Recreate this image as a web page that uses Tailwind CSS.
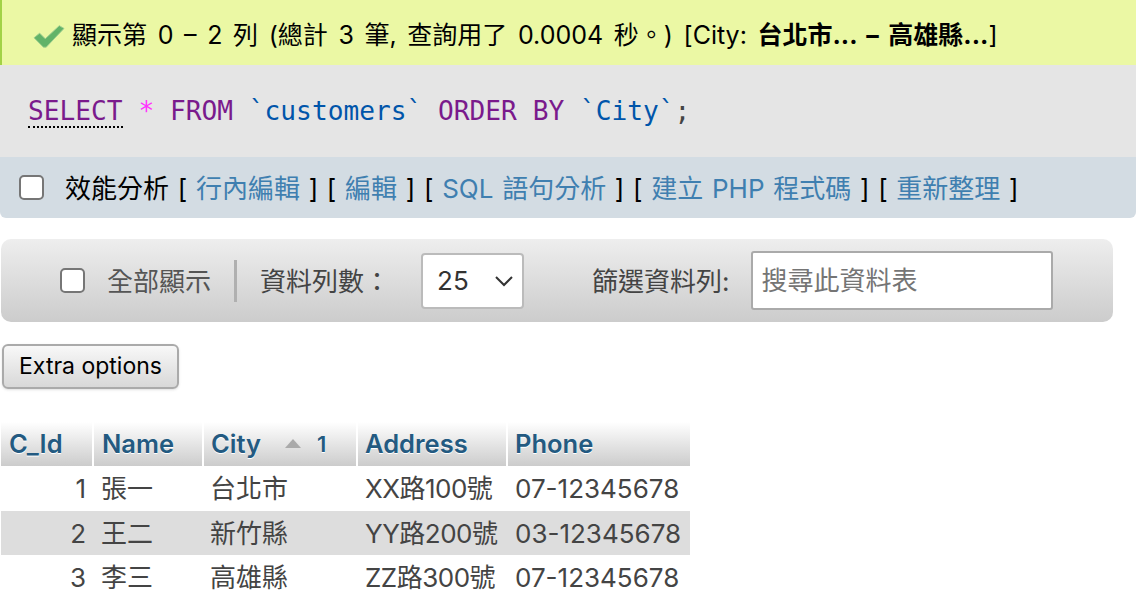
<!DOCTYPE html>
<html lang="zh-Hant">
<head>
    <meta charset="UTF-8">
    <meta name="viewport" content="width=device-width, initial-scale=1.0">
    <title>customers</title>
    <script src="https://cdn.jsdelivr.net/npm/@tailwindcss/browser@4"></script>
</head>
<body class="bg-white h-[612px] overflow-hidden text-[#444] font-['Inter','Noto_Sans_CJK_TC',sans-serif]">
    <!-- Query result message -->
    <div class="h-[65px] flex items-center bg-[#ebf8a4] border-l-2 border-[#a2d246] pl-[30px] pt-[6px] text-[25px] text-black whitespace-nowrap [word-spacing:3.6px]">
        <svg class="w-[34px] h-[30px] mr-[6px] shrink-0 -mt-[1px]" viewBox="0 0 36 32">
            <path d="M2 19 L8 14 L14 20 L29 6 L34 9 L15 29 L12 29 Z" fill="#62b368" stroke="#9fcf8f" stroke-width="1"/>
        </svg>
        <span>顯示第 0 – 2 列 (總計 3 筆, 查詢用了 0.0004 秒。) [City: <b>台北市... – 高雄縣...</b>]</span>
    </div>

    <!-- SQL -->
    <div class="h-[92px] flex items-center bg-[#e5e5e5] pl-[28px] pt-[1px] font-['DejaVu_Sans_Mono',monospace] text-[26.2px] whitespace-pre">
        <span><span class="text-[#7a1a8c] border-b-2 border-dotted border-black">SELECT</span> <span class="text-[#ff33ff]">*</span> <span class="text-[#7a1a8c]">FROM</span> <span class="text-[#0055aa]">`customers`</span> <span class="text-[#7a1a8c]">ORDER BY</span> <span class="text-[#0055aa]">`City`</span><span class="text-[#444]">;</span></span>
    </div>

    <!-- Query tools -->
    <div class="h-[61px] flex items-center bg-[#d3dce3] rounded-b-md pl-[19px] text-[26px] text-black whitespace-pre [word-spacing:1.4px]">
        <input type="checkbox" class="appearance-none w-[25px] h-[25px] bg-white border-2 border-[#767676] rounded-[5px] mr-[21px] shrink-0">
        <span class="pt-[1px]">效能分析 [ <a class="text-[#3f7fb0]">行內編輯</a> ] [ <a class="text-[#3f7fb0]">編輯</a> ] [ <a class="text-[#3f7fb0]">SQL 語句分析</a> ] [ <a class="text-[#3f7fb0]">建立 PHP 程式碼</a> ] [ <a class="text-[#3f7fb0]">重新整理</a> ]</span>
    </div>

    <!-- Navigation toolbar -->
    <div class="mt-[21px] ml-[1px] w-[1112px] h-[83px] flex items-center rounded-[10px] bg-gradient-to-b from-[#eeeeee] to-[#cccccc] pl-[59px] text-[26px] whitespace-nowrap">
        <input type="checkbox" class="appearance-none w-[25px] h-[25px] bg-white border-2 border-[#767676] rounded-[5px] mr-[22px] shrink-0">
        <span class="text-[#555] pt-[1px]">全部顯示</span>
        <span class="w-[3px] h-[42px] bg-[#b0b0b0] mx-[23px]"></span>
        <span class="pt-[1px]">資料列數：</span>
        <div class="ml-[31px] w-[103px] h-[56px] flex items-center justify-between bg-white border-2 border-[#bbb] rounded-[4px] pl-[14px] pr-[8px] text-[#333]">
            <span>25</span>
            <svg class="w-[20px] h-[12px]" viewBox="0 0 20 12" fill="none" stroke="#333" stroke-width="2"><path d="M2 2 L10 10 L18 2"/></svg>
        </div>
        <span class="ml-[68px] pt-[1px]">篩選資料列:</span>
        <input type="text" placeholder="搜尋此資料表" class="ml-[21px] w-[302px] h-[59px] bg-white border-2 border-[#aaa] rounded-[3px] pl-[9px] text-[26px] placeholder:text-[#757575]">
    </div>

    <button class="mt-[22px] ml-[2px] block w-[177px] h-[45px] rounded-[6px] border-2 border-[#aaa] bg-gradient-to-b from-[#f8f8f8] to-[#d8d8d8] shadow-sm text-[23px] text-black">Extra options</button>

    <!-- Results table -->
    <table class="mt-[33px] ml-[1px] w-[689px] table-fixed border-collapse text-[26px]">
        <colgroup>
            <col class="w-[92px]"><col class="w-[110px]"><col class="w-[154px]"><col class="w-[150px]"><col>
        </colgroup>
        <thead>
            <tr class="h-[44px] text-left text-[#235a81] text-[25.5px] [text-shadow:0_1px_0_#fff]">
                <th class="bg-gradient-to-b from-white to-[#cccccc] border-r-2 border-white pl-[8px] font-semibold">C_Id</th>
                <th class="bg-gradient-to-b from-white to-[#cccccc] border-r-2 border-white pl-[8px] font-semibold">Name</th>
                <th class="bg-gradient-to-b from-white to-[#cccccc] border-r-2 border-white pl-[7px] font-semibold">
                    <div class="flex items-center">
                        <span>City</span>
                        <svg class="ml-[24px] w-[16px] h-[10px]" viewBox="0 0 16 10"><path d="M8 0 L16 9 L0 9 Z" fill="#aaa"/></svg>
                        <span class="ml-[16px] text-[22px]">1</span>
                    </div>
                </th>
                <th class="bg-gradient-to-b from-white to-[#cccccc] border-r-2 border-white pl-[7px] font-semibold">Address</th>
                <th class="bg-gradient-to-b from-white to-[#cccccc] pl-[7px] font-semibold">Phone</th>
            </tr>
        </thead>
        <tbody>
            <tr class="h-[45px]">
                <td class="text-right pr-[7px]">1</td><td class="pl-[8px]">張一</td><td class="pl-[7px]">台北市</td><td class="pl-[8px] tracking-[-0.5px]">XX路100號</td><td class="pl-[8px]">07-12345678</td>
            </tr>
            <tr class="h-[44px] bg-[#dddddd]">
                <td class="text-right pr-[7px]">2</td><td class="pl-[8px]">王二</td><td class="pl-[7px]">新竹縣</td><td class="pl-[8px] tracking-[-0.5px]">YY路200號</td><td class="pl-[8px]">03-12345678</td>
            </tr>
            <tr class="h-[45px]">
                <td class="text-right pr-[7px]">3</td><td class="pl-[8px]">李三</td><td class="pl-[7px]">高雄縣</td><td class="pl-[8px] tracking-[-0.5px]">ZZ路300號</td><td class="pl-[8px]">07-12345678</td>
            </tr>
        </tbody>
    </table>
</body>
</html>
